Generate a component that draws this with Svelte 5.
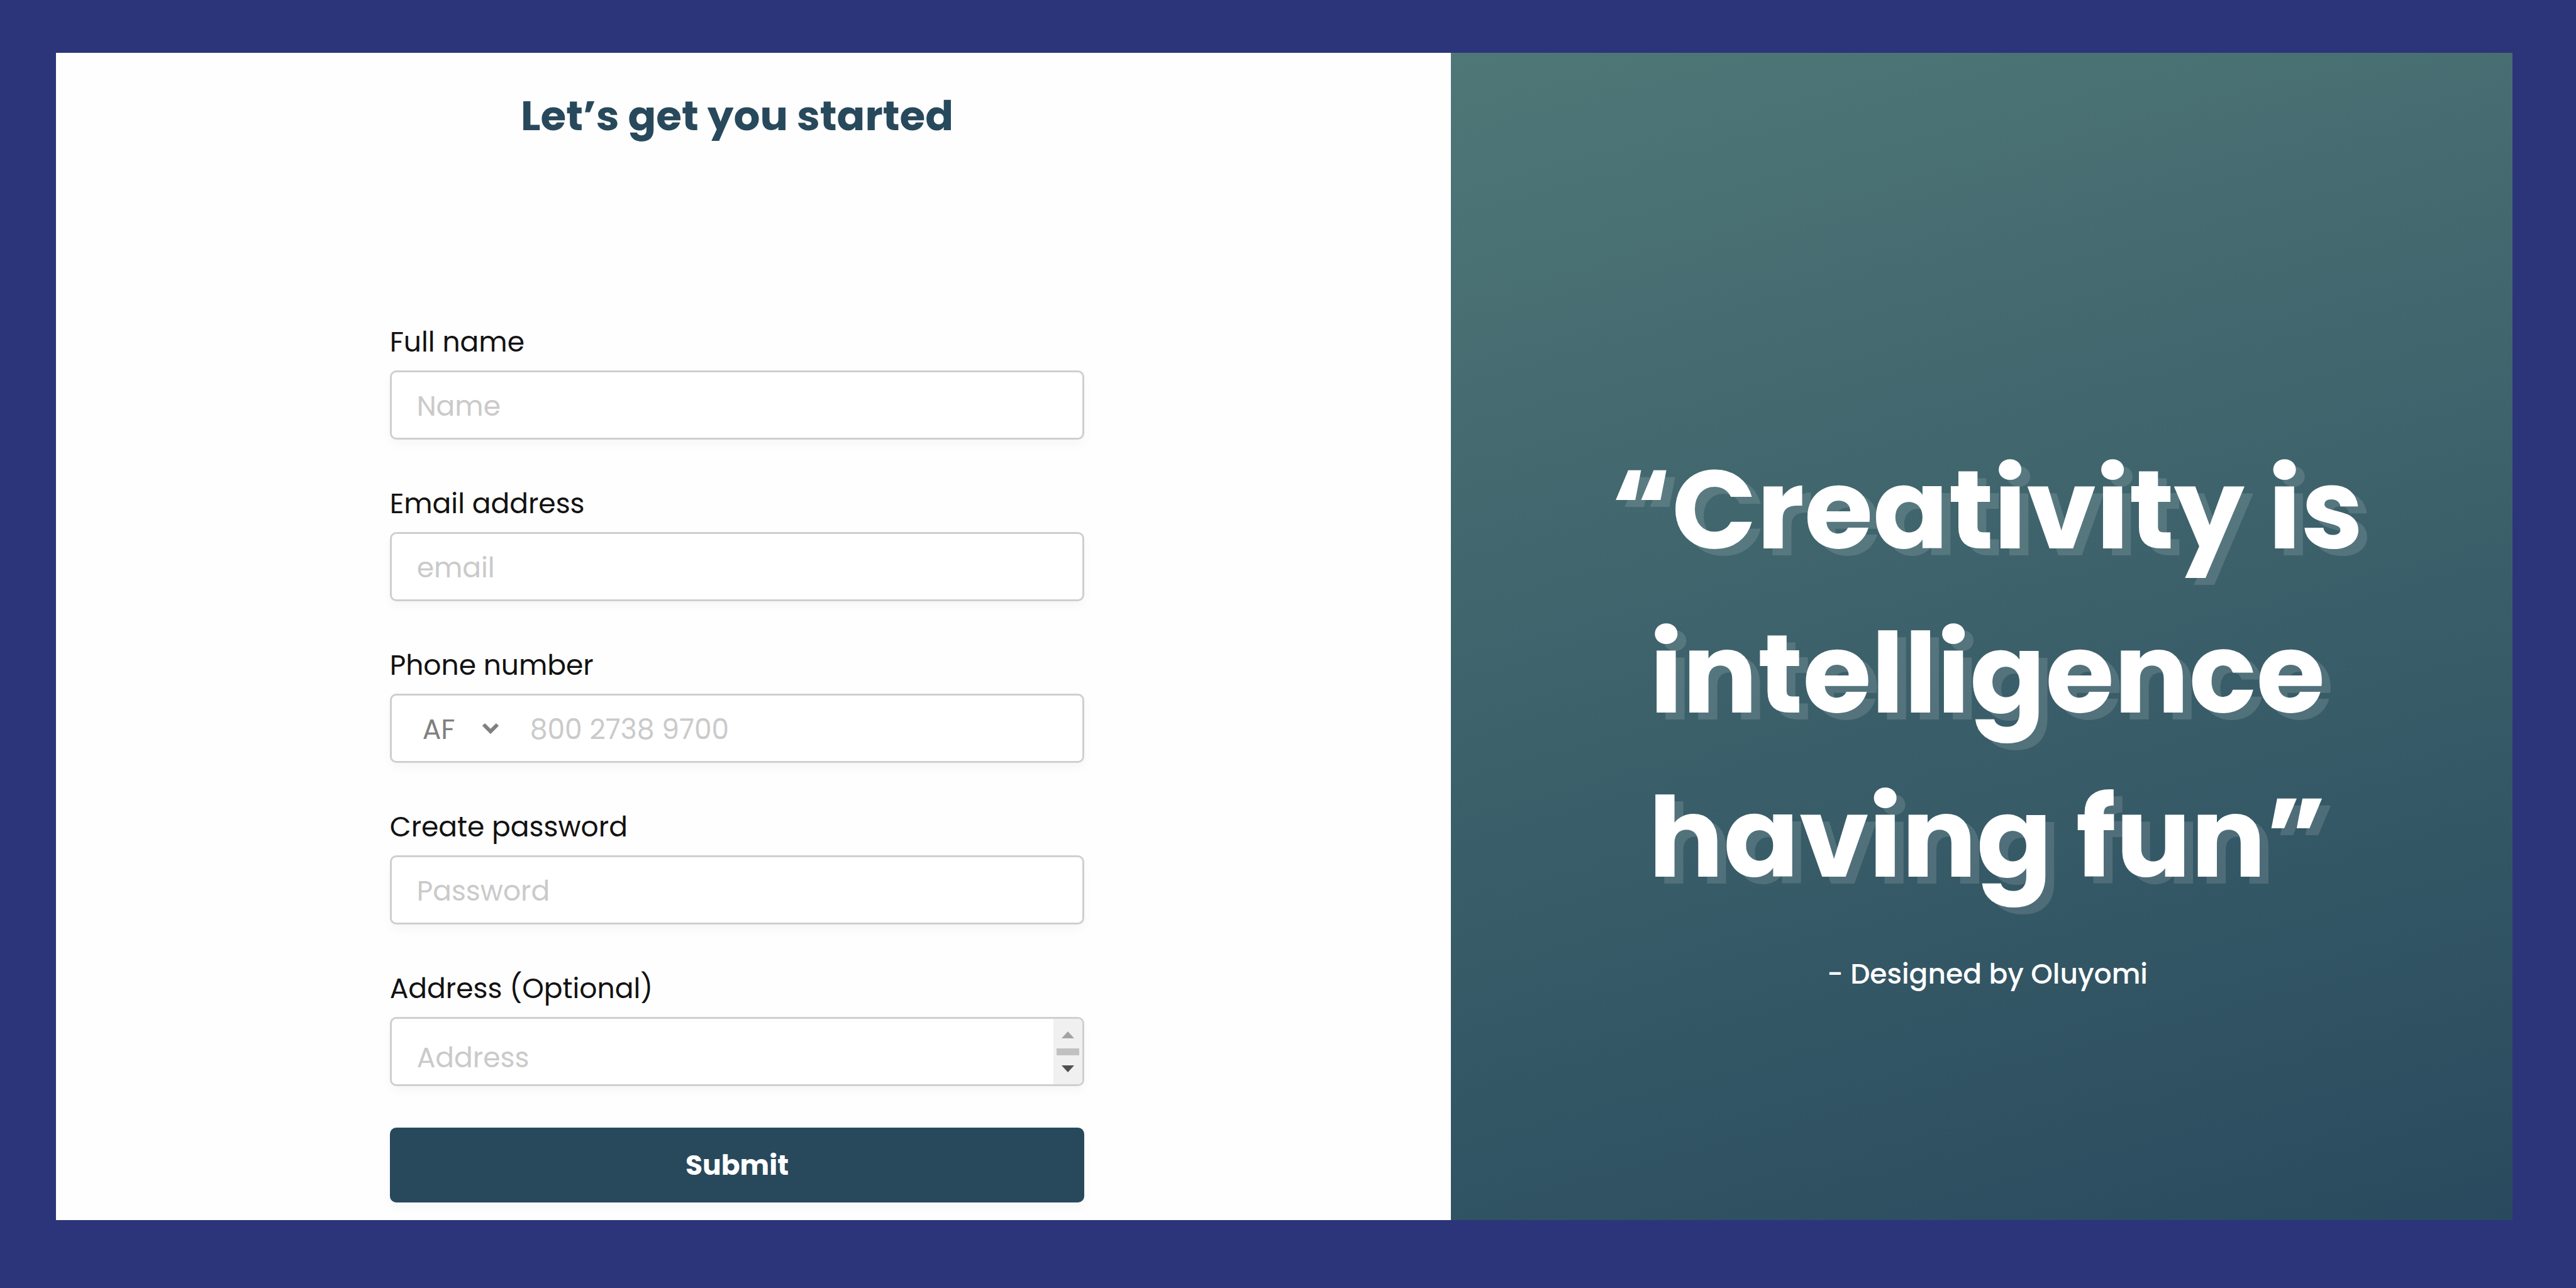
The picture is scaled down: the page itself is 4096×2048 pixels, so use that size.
<script>
  const countries = ['AF', 'AL', 'DZ', 'NG', 'US'];
  let country = $state('AF');
</script>

<main class="page">
  <section class="signup">
    <h1>Let’s get you started</h1>
    <form onsubmit={(e) => e.preventDefault()}>
      <div class="fields">
        <div class="field">
          <label for="name">Full name</label>
          <div class="box"><input id="name" type="text" placeholder="Name" /></div>
        </div>
        <div class="field">
          <label for="email">Email address</label>
          <div class="box"><input id="email" type="email" placeholder="email" /></div>
        </div>
        <div class="field">
          <label for="phone">Phone number</label>
          <div class="box">
            <div class="country">
              <select aria-label="Country" bind:value={country}>
                {#each countries as code}
                  <option value={code}>{code}</option>
                {/each}
              </select>
              <svg class="chevron" viewBox="0 0 28 18" aria-hidden="true">
                <path d="M3 3l11 11L25 3" />
              </svg>
            </div>
            <input id="phone" type="tel" placeholder="800 2738 9700" />
          </div>
        </div>
        <div class="field">
          <label for="password">Create password</label>
          <div class="box"><input id="password" type="password" placeholder="Password" /></div>
        </div>
        <div class="field">
          <label for="address">Address (Optional)</label>
          <div class="box">
            <textarea id="address" rows="1" placeholder="Address"></textarea>
            <div class="scrollbar" aria-hidden="true">
              <svg viewBox="0 0 20 11"><path d="M10 0l10 11H0z" fill="#a3a3a3" /></svg>
              <span class="thumb"></span>
              <svg viewBox="0 0 20 11"><path d="M0 0h20L10 11z" fill="#505050" /></svg>
            </div>
          </div>
        </div>
      </div>
      <button type="submit">Submit</button>
    </form>
  </section>

  <aside class="quote">
    <blockquote>“Creativity is<br />intelligence<br />having fun”</blockquote>
    <p>- Designed by Oluyomi</p>
  </aside>
</main>

<style>
  :global(body) {
    background: #2c357a;
  }

  .page {
    box-sizing: border-box;
    min-height: 100vh;
    padding: 84px 101px 108px 89px;
    display: grid;
    grid-template-columns: minmax(0, 2218fr) minmax(0, 1688fr);
    font-family: Poppins, Inter, 'Open Sans', sans-serif;
    background: #2c357a;
  }

  .signup {
    padding: 52px 52px 28px 0;
    display: flex;
    flex-direction: column;
    align-items: center;
    gap: 282px;
    background: #fefefe;
  }

  h1 {
    margin: 0;
    font-size: 66px;
    line-height: 96px;
    font-weight: 700;
    color: #28495c;
  }

  form {
    width: 51%;
    display: flex;
    flex-direction: column;
    gap: 66px;
  }

  .fields {
    display: grid;
    gap: 72px;
  }

  .field {
    display: grid;
    gap: 15px;
  }

  label {
    font-size: 44px;
    line-height: 60px;
    color: #121212;
  }

  .box {
    box-sizing: border-box;
    height: 110px;
    display: flex;
    overflow: hidden;
    border: 3px solid #cfcfcf;
    border-radius: 10px;
    background: #fff;
    box-shadow: 0 8px 16px rgba(0, 0, 0, 0.03);
  }

  input,
  textarea,
  select {
    box-sizing: border-box;
    min-width: 0;
    margin: 0;
    border: 0;
    outline: 0;
    background: transparent;
    font-family: inherit;
    font-size: 44px;
    line-height: 60px;
    color: #333;
  }

  input,
  textarea {
    flex: 1;
    padding: 24px 40px 20px;
  }

  textarea {
    padding-top: 32px;
    padding-bottom: 12px;
    resize: none;
    overflow: hidden;
  }

  ::placeholder {
    color: #cacaca;
    opacity: 1;
  }

  .country {
    display: grid;
    align-items: center;
    width: 180px;
  }

  .country > * {
    grid-area: 1 / 1;
  }

  select {
    appearance: none;
    width: 100%;
    padding: 24px 0 20px 49px;
    color: #808080;
  }

  .chevron {
    justify-self: end;
    width: 28px;
    height: 18px;
    margin-right: 9px;
    fill: none;
    stroke: #808080;
    stroke-width: 6;
    pointer-events: none;
  }

  .scrollbar {
    width: 46px;
    display: flex;
    flex-direction: column;
    align-items: center;
    justify-content: center;
    gap: 16px;
    background: #f0f0f0;
  }

  .scrollbar svg {
    width: 20px;
    height: 11px;
  }

  .thumb {
    width: 36px;
    height: 11px;
    background: #c1c1c1;
  }

  button {
    height: 119px;
    border: 0;
    border-radius: 10px;
    background: #28495c;
    box-shadow: 0 8px 16px rgba(0, 0, 0, 0.03);
    font-family: inherit;
    font-size: 44px;
    font-weight: 700;
    color: #fff;
  }

  .quote {
    padding: 596px 0 0 18px;
    text-align: center;
    color: #fff;
    background: linear-gradient(165deg, #4f7777, #294a5e);
  }

  blockquote {
    margin: 0;
    font-size: 177px;
    line-height: 261px;
    font-weight: 700;
    text-shadow: 14px 11px rgba(255, 255, 255, 0.13);
  }

  p {
    margin: 56px 0 0;
    font-size: 44px;
    line-height: 60px;
    font-weight: 500;
  }
</style>
